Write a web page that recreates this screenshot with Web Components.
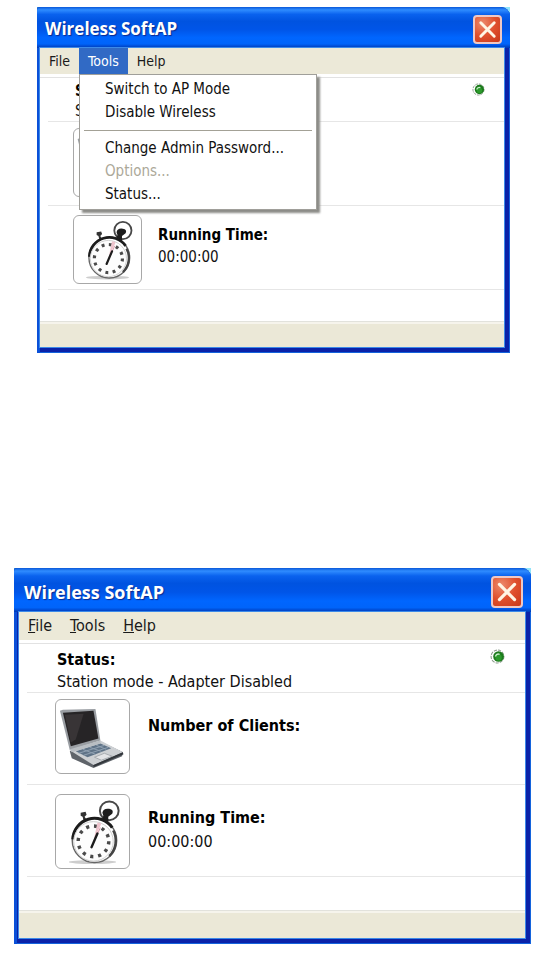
<!DOCTYPE html>
<html lang="en">
<head>
<meta charset="utf-8">
<title>Wireless SoftAP</title>
<style>
  body {
    margin: 0;
    background: #fff;
    color: #111;
    font-family: "DejaVu Sans Condensed", "DejaVu Sans", Tahoma, sans-serif;
  }

  main {
    display: flex;
    flex-direction: column;
    gap: 215px;
    padding: 7px 17px 10px 14px;
  }

  soft-window.small {
    margin: 0 21px 0 23px;
  }

  /* the bigger of the two windows */
  soft-window.large {
    --title-height: 44px;
    --title-size: 18px;
    --title-pad: 10px;
    --close-size: 32px;
    --edge: 5px;
    --menu-height: 28px;
    --menu-size: 16px;
    --text-size: 16px;
    --status-line: 22px;
    --status-height: 49px;
    --status-pad: 38px;
    --status-top: 5px;
    --row-height: 92px;
    --row-line: 24px;
    --box-size: 75px;
    --box-gap: 18px;
    --text-top: 21px;
    --empty-height: 33px;
    --footer-height: 27px;
    --led-pad: 20px;
    --led-size: 15px;
    --indent: 28px;
  }
</style>
</head>
<body>
<main>
  <soft-window class="small" title-text="Wireless SoftAP">
    <menu-bar slot="menu">
      <menu-button>File</menu-button>
      <menu-button open>Tools
        <menu-popup slot="popup">
          <menu-item>Switch to AP Mode</menu-item>
          <menu-item>Disable Wireless</menu-item>
          <hr>
          <menu-item>Change Admin Password...</menu-item>
          <menu-item disabled>Options...</menu-item>
          <menu-item>Status...</menu-item>
        </menu-popup>
      </menu-button>
      <menu-button>Help</menu-button>
    </menu-bar>
    <status-row label="Status:">Station mode</status-row>
    <info-row class="first" label="">
      <laptop-icon slot="icon"></laptop-icon>
    </info-row>
    <info-row label="Running Time:">
      <stopwatch-icon slot="icon"></stopwatch-icon>
      00:00:00
    </info-row>
  </soft-window>

  <soft-window class="large" title-text="Wireless SoftAP">
    <menu-bar slot="menu">
      <menu-button><u>F</u>ile</menu-button>
      <menu-button><u>T</u>ools</menu-button>
      <menu-button><u>H</u>elp</menu-button>
    </menu-bar>
    <status-row label="Status:">Station mode - Adapter Disabled</status-row>
    <info-row class="first" label="Number of Clients:">
      <laptop-icon slot="icon"></laptop-icon>
    </info-row>
    <info-row label="Running Time:">
      <stopwatch-icon slot="icon"></stopwatch-icon>
      00:00:00
    </info-row>
  </soft-window>
</main>

<script>
function makeTemplate(html) {
  const template = document.createElement('template');
  template.innerHTML = html;
  return template;
}

class BaseElement extends HTMLElement {
  constructor() {
    super();
    this.attachShadow({ mode: 'open' });
    this.shadowRoot.appendChild(this.constructor.template.content.cloneNode(true));
  }
}

class SoftWindow extends BaseElement {
  static template = makeTemplate(`
    <style>
      :host {
        display: block;
        background: linear-gradient(90deg, #2a80d8 50%, #8fe4fb 50%);
      }

      .window {
        padding: 0 6px 6px var(--edge, 3px);
        border-radius: 4px 9px 0 0;
        background: #0a22a8;
        box-shadow: inset 3px 0 #0a50d8, inset -1px -1px #1463dc;
      }

      header {
        display: flex;
        align-items: center;
        justify-content: space-between;
        box-sizing: border-box;
        height: var(--title-height, 41px);
        margin: 0 -6px 0 calc(0px - var(--edge, 3px));
        padding: 3px 8px 0 var(--title-pad, 8px);
        border-radius: 4px 9px 0 0;
        background: linear-gradient(#0a58d8 0, #2f8cff 7%, #0a62ee 18%, #0053e0 35%, #0055e8 55%, #0066ff 75%, #0064fa 90%, #0038b4 100%);
      }

      h1 {
        margin: 0;
        color: #fff;
        font: bold var(--title-size, 17px)/24px "Open Sans", "Noto Sans", sans-serif;
        text-shadow: 1px 1px 1px #0a2a90;
        white-space: nowrap;
      }

      button {
        display: block;
        width: var(--close-size, 29px);
        height: var(--close-size, 29px);
        padding: 0;
        border: 2px solid #efc8c4;
        border-radius: 4px;
        background: radial-gradient(circle at 30% 25%, #ec8a6c, #e0502c 50%, #c8381a);
      }

      button svg {
        display: block;
        width: 100%;
        height: 100%;
      }

      .client {
        background: #fff;
        outline: 1px solid #3d8ae8;
      }

      .rows {
        padding-top: 3px;
      }

      .empty {
        height: var(--empty-height, 31px);
        margin-left: 8px;
        border-top: 1px solid #e6e6e6;
      }

      footer {
        height: var(--footer-height, 25px);
        border-top: 1px solid #e2e2dc;
        box-shadow: inset 0 2px #f6f4ec;
        background: #ebe8d7;
      }
    </style>
    <section class="window">
      <header>
        <h1></h1>
        <button type="button" aria-label="Close">
          <svg viewBox="0 0 26 26">
            <path d="M6 6 L20 20 M20 6 L6 20" stroke="#fff6e4" stroke-width="3" stroke-linecap="round"/>
          </svg>
        </button>
      </header>
      <div class="client">
        <slot name="menu"></slot>
        <div class="rows"><slot></slot></div>
        <div class="empty"></div>
        <footer></footer>
      </div>
    </section>
  `);

  connectedCallback() {
    this.shadowRoot.querySelector('h1').textContent = this.getAttribute('title-text');
  }
}

class MenuBar extends BaseElement {
  static template = makeTemplate(`
    <style>
      :host {
        display: block;
        background: #ece9d8;
      }

      nav {
        display: flex;
        height: var(--menu-height, 26px);
      }
    </style>
    <nav><slot></slot></nav>
  `);
}

class MenuButton extends BaseElement {
  static template = makeTemplate(`
    <style>
      :host {
        display: block;
        position: relative;
      }

      button {
        display: block;
        height: 100%;
        padding: 0 9px;
        border: 0;
        background: none;
        color: #1a1a1a;
        font: var(--menu-size, 14px)/20px "DejaVu Sans Condensed", "DejaVu Sans", sans-serif;
      }

      :host([open]) button {
        background: #316ac5;
        color: #fff;
      }
    </style>
    <button type="button"><slot></slot></button>
    <slot name="popup"></slot>
  `);
}

class MenuPopup extends BaseElement {
  static template = makeTemplate(`
    <style>
      :host {
        display: block;
        position: absolute;
        top: 100%;
        left: 0;
        z-index: 1;
        box-sizing: border-box;
        width: 238px;
        padding: 3px;
        border: 1px solid #a09f9a;
        background: #fff;
        box-shadow: 3px 3px 2px #8c8c88;
      }

      ::slotted(hr) {
        margin: 6px 1px;
        border: 0;
        border-top: 1px solid #a3a196;
      }
    </style>
    <slot></slot>
  `);
}

class MenuItem extends BaseElement {
  static template = makeTemplate(`
    <style>
      :host {
        display: block;
      }

      button {
        display: block;
        width: 100%;
        padding: 0 0 0 22px;
        border: 0;
        background: none;
        color: #111;
        font: 15px/23px "DejaVu Sans Condensed", "DejaVu Sans", sans-serif;
        text-align: left;
        white-space: nowrap;
      }

      button:disabled {
        color: #aca899;
      }
    </style>
    <button type="button"><slot></slot></button>
  `);

  connectedCallback() {
    this.shadowRoot.querySelector('button').disabled = this.hasAttribute('disabled');
  }
}

class StatusRow extends BaseElement {
  static template = makeTemplate(`
    <style>
      :host {
        display: flex;
        justify-content: space-between;
        align-items: flex-start;
        box-sizing: border-box;
        height: var(--status-height, 44px);
        padding: 0 var(--led-pad, 19px) 0 var(--status-pad, 35px);
        border-top: 1px solid #e2e2e2;
        font-size: var(--text-size, 15px);
        line-height: var(--status-line, 20px);
        white-space: nowrap;
      }

      .text {
        padding-top: var(--status-top, 3px);
      }

      strong {
        display: block;
        color: #000;
      }

      svg {
        width: var(--led-size, 13px);
        height: var(--led-size, 13px);
        margin-top: 5px;
      }
    </style>
    <div class="text">
      <strong></strong>
      <slot></slot>
    </div>
    <svg viewBox="0 0 14 14">
      <circle cx="7" cy="7" r="6" fill="none" stroke="#8d9c8d" stroke-width="1" stroke-dasharray="3 1"/>
      <circle cx="8" cy="7" r="5" fill="#1c7a1c"/>
      <circle cx="8" cy="8" r="3" fill="#2c9a2c"/>
      <path d="M5 7 Q6 4 9 5" fill="none" stroke="#c8f0c8" stroke-width="1.3"/>
    </svg>
  `);

  connectedCallback() {
    this.shadowRoot.querySelector('strong').textContent = this.getAttribute('label');
  }
}

class InfoRow extends BaseElement {
  static template = makeTemplate(`
    <style>
      :host {
        display: flex;
        align-items: flex-start;
        gap: var(--box-gap, 16px);
        box-sizing: border-box;
        height: var(--row-height, 84px);
        margin-left: 8px;
        padding-left: var(--indent, 25px);
        border-top: 1px solid #e6e6e6;
        font-size: var(--text-size, 15px);
        line-height: var(--row-line, 22px);
      }

      figure {
        flex: none;
        box-sizing: border-box;
        width: var(--box-size, 69px);
        height: var(--box-size, 69px);
        margin: 9px 0 0;
        border: 1px solid #a8a8a8;
        border-radius: 6px;
      }

      :host(.first) figure {
        margin-top: 6px;
      }

      .text {
        padding-top: var(--text-top, 18px);
      }

      strong {
        display: block;
        color: #000;
      }
    </style>
    <figure><slot name="icon"></slot></figure>
    <div class="text">
      <strong></strong>
      <slot></slot>
    </div>
  `);

  connectedCallback() {
    this.shadowRoot.querySelector('strong').textContent = this.getAttribute('label');
  }
}

class LaptopIcon extends BaseElement {
  static template = makeTemplate(`
    <style>
      :host, svg {
        display: block;
        width: 100%;
        height: 100%;
      }
    </style>
    <svg viewBox="0 0 74 74">
      <path d="M14 52 L45 42 L68 53 L67 57 L38 69 L16 59 Z" fill="#5f646a"/>
      <path d="M14 51 L45 41 L68 53 L38 66 Z" fill="#cdd0d3"/>
      <path d="M20 52 L45 44 L56 49 L32 58 Z" fill="#5f7387"/>
      <path d="M23 54 L49 46 M28 56 L53 48 M27 50 L40 55 M34 48 L46 52 M41 46 L51 50" stroke="#8fa1b2" stroke-width="1"/>
      <path d="M39 58 L49 54 L57 57 L46 61 Z" fill="#e3e4e6" stroke="#a8acb0" stroke-width="1"/>
      <path d="M38 67 L68 54" stroke="#33373c" stroke-width="2"/>
      <path d="M4 11 L7 10 L40 9 L45 41 L14 51 Z" fill="#9a9ea3"/>
      <path d="M7 13 L38 11 L43 39 L15 47 Z" fill="#262426"/>
      <path d="M9 15 L28 14 L20 40 L15 43 Z" fill="#383436"/>
      <path d="M14 50 L45 41 L45 44 L16 53 Z" fill="#b9bec3"/>
    </svg>
  `);
}

class StopwatchIcon extends BaseElement {
  static template = makeTemplate(`
    <style>
      :host, svg {
        display: block;
        width: 100%;
        height: 100%;
      }
    </style>
    <svg viewBox="0 0 74 74">
      <ellipse cx="37" cy="68" rx="24" ry="2" fill="#cdcdcd"/>
      <circle cx="54" cy="16" r="9.5" fill="none" stroke="#484848" stroke-width="2"/>
      <path d="M47 18 Q48 13 54 14 Q59 15 57 19 L53 22 L53 27 L46 26 L48 21 Z" fill="#1d1d1d"/>
      <path d="M25 18 L30 17 L31 20 L29 22 L31 25 L28 26 L27 22 L25 21 Z" fill="#333"/>
      <circle cx="39" cy="46" r="22.5" fill="#fff" stroke="#666" stroke-width="1.5"/>
      <path d="M17 45 A22 22 0 0 1 57 33" fill="none" stroke="#1c1c1c" stroke-width="3"/>
      <path d="M58 36 A22 22 0 0 1 54 62" fill="none" stroke="#444" stroke-width="2.5"/>
      <circle cx="38" cy="47" r="20" fill="#fdfdfd" stroke="#ccc" stroke-width="1"/>
      <circle cx="38" cy="47" r="15.5" fill="none" stroke="#4a4a4a" stroke-width="3.5" stroke-dasharray="3.2 4.92"/>
      <path d="M38 47 L46 29 L42 28 Z" fill="#eec4cd"/>
      <path d="M36 53 L45 33" stroke="#d89aaa" stroke-width="1"/>
      <path d="M36 53 L42 39" stroke="#1c1c1c" stroke-width="2.4" stroke-linecap="round"/>
    </svg>
  `);
}

customElements.define('soft-window', SoftWindow);
customElements.define('menu-bar', MenuBar);
customElements.define('menu-button', MenuButton);
customElements.define('menu-popup', MenuPopup);
customElements.define('menu-item', MenuItem);
customElements.define('status-row', StatusRow);
customElements.define('info-row', InfoRow);
customElements.define('laptop-icon', LaptopIcon);
customElements.define('stopwatch-icon', StopwatchIcon);
</script>
</body>
</html>
